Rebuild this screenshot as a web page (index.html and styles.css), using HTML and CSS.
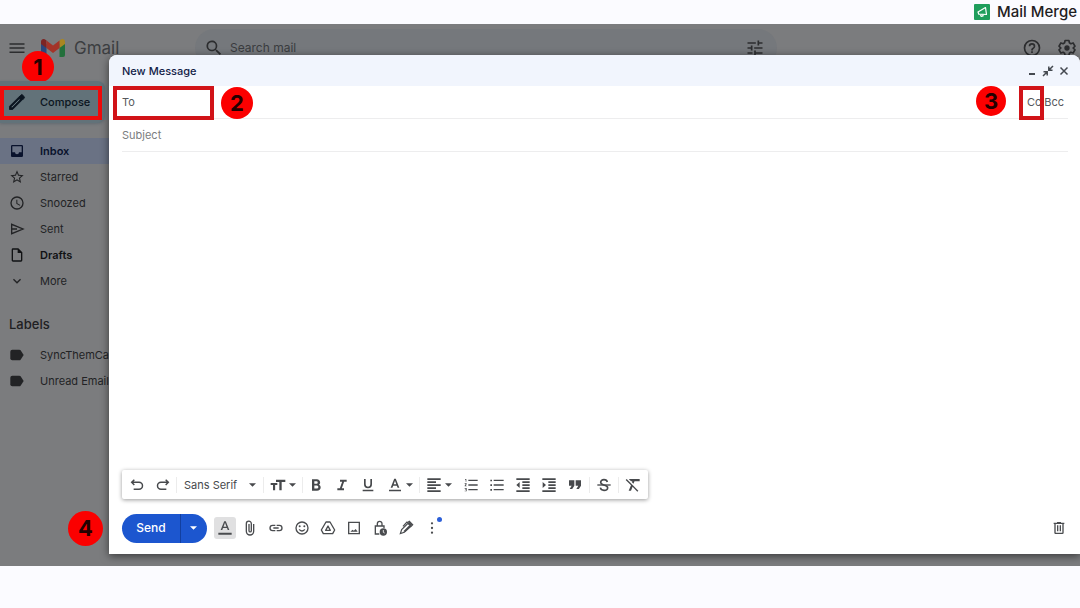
FILE: index.html
```html
<!DOCTYPE html>
<html lang="en">
<head>
<meta charset="utf-8">
<meta name="viewport" content="width=device-width, initial-scale=1">
<title>Gmail - New Message</title>
<link rel="stylesheet" href="styles.css">
</head>
<body>
<header class="brand">
  <svg class="brand-logo" viewBox="0 0 16 16"><rect width="16" height="16" rx="1" fill="#1f9e5c"/><path d="M11.500 3.500 4 8l.8 2.200 7.700.3zM6.300 10.400l.8 2 2-.5-.3-1.300" fill="none" stroke="#fff" stroke-width="1.200" stroke-linejoin="round"/></svg>
  <span>Mail Merge</span>
</header>

<main class="app">
  <div class="topbar">
    <button class="bare" aria-label="Main menu"><svg class="i18" viewBox="0 0 24 24"><path d="M2 5.500h20v2H2zm0 5.500h20v2H2zm0 5.500h20v2H2z"/></svg></button>
    <div class="gmail">
      <svg class="gmail-logo" viewBox="0 0 24 18"><path d="M0 2.500V16q0 2 2 2h3.500V5z" fill="#29477e"/><path d="M24 2.500V16q0 2-2 2h-3.500V5z" fill="#23703c"/><path d="M18.500 1.500V9L24 5V2.700C24 .2 21.200-.8 19.500.7z" fill="#a98621"/><path d="M5.500 1.500V9L0 5V2.700C0 .2 2.800-.8 4.500.7z" fill="#7c2524"/><path d="M5.500 1.500 12 6.500l6.500-5V9L12 14 5.500 9z" fill="#a43429"/></svg>
      <span>Gmail</span>
    </div>
    <label class="search">
      <svg class="i20" viewBox="0 0 24 24"><path d="M15.500 14h-.8l-.3-.3A6.500 6.500 0 1 0 13.700 14.400l.3.300v.8l5 5 1.500-1.500zm-6 0a4.500 4.500 0 1 1 0-9 4.500 4.500 0 0 1 0 9z"/></svg>
      <input type="text" placeholder="Search mail" aria-label="Search mail">
      <svg class="i20" viewBox="0 0 24 24"><path d="M3 17v2h6v-2zM3 5v2h10V5zm10 16v-2h8v-2h-8v-2h-2v6zM7 9v2H3v2h4v2h2V9zm14 4v-2H11v2zm-6-4h2V7h4V5h-4V3h-2z"/></svg>
    </label>
    <div class="topbar-end">
      <button class="bare" aria-label="Support"><svg class="i20" viewBox="0 0 24 24"><path d="M11 18h2v-2h-2zm1-16a10 10 0 1 0 0 20 10 10 0 0 0 0-20zm0 18a8 8 0 1 1 0-16 8 8 0 0 1 0 16zm0-14a4 4 0 0 0-4 4h2c0-1.100.9-2 2-2s2 .9 2 2c0 2-3 1.750-3 5h2c0-2.250 3-2.500 3-5a4 4 0 0 0-4-4z"/></svg></button>
      <button class="bare" aria-label="Settings"><svg class="i20" viewBox="0 0 24 24"><path d="M9.700 3h4.600l.6 2.800 1.700 1 2.700-.9 2.300 4-2.100 1.900v.4l2.100 1.900-2.300 4-2.700-.9-1.700 1-.6 2.800H9.700l-.6-2.800-1.700-1-2.700.9-2.300-4 2.100-1.900v-.4L2.400 9.900l2.300-4 2.700.9 1.700-1z" fill="none" stroke="currentColor" stroke-width="2" stroke-linejoin="round"/><circle cx="12" cy="12" r="3.200"/></svg></button>
    </div>
  </div>
  <span class="badge badge-1">1</span>

  <aside class="sidebar">
    <button class="compose-btn"><svg class="i20" viewBox="0 0 24 24"><path d="M3 17.200V21h3.800L19 8.800 15.200 5zm3.300 1.800H5v-1.300l9.600-9.600 1.300 1.300zM20.700 5.600l-2.300-2.300a1 1 0 0 0-1.400 0l-1.800 1.900L19 9l1.800-1.800c.3-.4.3-1.200-.1-1.600z" stroke="currentColor"/></svg>Compose<span class="mark mark-compose"></span></button>
    <nav class="nav">
      <a href="#" class="nav-item active"><svg class="i16" viewBox="0 0 24 24"><path d="M19 3H5a2 2 0 0 0-2 2v14c0 1.100.9 2 2 2h14a2 2 0 0 0 2-2V5a2 2 0 0 0-2-2zm0 11h-4a3 3 0 0 1-6 0H5V5h14z"/></svg>Inbox</a>
      <a href="#" class="nav-item"><svg class="i16" viewBox="0 0 24 24"><path d="m22 9.200-7.200-.6L12 2 9.200 8.600 2 9.200l5.500 4.800-1.700 7L12 17.300l6.200 3.700-1.600-7zM12 15.400l-3.800 2.300 1-4.300-3.300-2.900 4.400-.4L12 6.100l1.700 4 4.400.4-3.300 2.900 1 4.300z"/></svg>Starred</a>
      <a href="#" class="nav-item"><svg class="i16" viewBox="0 0 24 24"><path d="M12 2a10 10 0 1 0 0 20 10 10 0 0 0 0-20zm0 18a8 8 0 1 1 0-16 8 8 0 0 1 0 16zm.5-13H11v6l5.200 3.200.8-1.300-4.500-2.700z"/></svg>Snoozed</a>
      <a href="#" class="nav-item"><svg class="i16" viewBox="0 0 24 24"><path d="M4 5v14l17-7zm0 7h8" fill="none" stroke="currentColor" stroke-width="2"/></svg>Sent</a>
      <a href="#" class="nav-item strong"><svg class="i16" viewBox="0 0 24 24"><path d="M14 2H6a2 2 0 0 0-2 2v16c0 1.100.9 2 2 2h12a2 2 0 0 0 2-2V8zM6 20V4h7v5h5v11z"/></svg>Drafts</a>
      <a href="#" class="nav-item"><svg class="i16" viewBox="0 0 24 24"><path d="M7.400 8.600 12 13.200l4.600-4.600L18 10l-6 6-6-6z"/></svg>More</a>
    </nav>
    <h2 class="labels-title">Labels</h2>
    <nav class="nav">
      <a href="#" class="nav-item"><svg class="i16" viewBox="0 0 24 24"><path d="M15.500 4H5a3 3 0 0 0-3 3v10a3 3 0 0 0 3 3h10.500c.8 0 1.500-.4 1.900-1L22 12l-4.600-7c-.4-.6-1.100-1-1.900-1z"/></svg>SyncThemCal</a>
      <a href="#" class="nav-item"><svg class="i16" viewBox="0 0 24 24"><path d="M15.500 4H5a3 3 0 0 0-3 3v10a3 3 0 0 0 3 3h10.500c.8 0 1.500-.4 1.900-1L22 12l-4.600-7c-.4-.6-1.100-1-1.900-1z"/></svg>Unread Emails</a>
    </nav>
  </aside>

  <section class="dialog" aria-label="New Message">
    <div class="dialog-head">
      <h1>New Message</h1>
      <div class="window-tools">
        <button class="bare" aria-label="Minimize"><svg class="i12" viewBox="0 0 12 12"><path d="M3 8h6v2H3z"/></svg></button>
        <button class="bare" aria-label="Exit full screen"><svg class="i12" viewBox="0 0 12 12"><path d="M6.800 1.500v3.700H10.500M7 5l4-4M5.200 10.500V6.800H1.500M5 7l-4 4" fill="none" stroke="currentColor" stroke-width="1.500"/></svg></button>
        <button class="bare" aria-label="Close"><svg class="i12" viewBox="0 0 12 12"><path d="m2.500 2.500 7 7m0-7-7 7" fill="none" stroke="currentColor" stroke-width="1.500"/></svg></button>
      </div>
    </div>
    <div class="fields">
      <div class="field">
        <span class="mark mark-to"></span>
        <label for="to">To</label>
        <input id="to" type="text">
        <span class="badge badge-2">2</span>
        <span class="badge badge-3">3</span>
        <button class="bare cc">Cc<span class="mark mark-cc"></span></button>
        <button class="bare">Bcc</button>
      </div>
      <div class="field"><input type="text" placeholder="Subject" aria-label="Subject"></div>
    </div>
    <textarea class="message" aria-label="Message body"></textarea>

    <div class="format-bar">
      <button class="tool" aria-label="Undo"><svg class="i16" viewBox="0 0 24 24"><path d="M8 4 4 8l4 4M4.500 8H15a5 5 0 0 1 0 10.500H7" fill="none" stroke="currentColor" stroke-width="2.200"/></svg></button>
      <button class="tool" aria-label="Redo"><svg class="i16" viewBox="0 0 24 24"><path d="m16 4 4 4-4 4m3.500-4H9a5 5 0 0 0 0 10.500h8" fill="none" stroke="currentColor" stroke-width="2.200"/></svg></button>
      <span class="sep"></span>
      <span class="font-pick"><select aria-label="Font"><option>Sans Serif</option></select><svg class="caret" viewBox="0 0 8 4"><path d="M0 0h8L4 4z"/></svg></span>
      <span class="sep"></span>
      <button class="tool menu" aria-label="Size"><svg class="i16" viewBox="0 0 24 24"><path d="M9 4v3.500h5V20h3.500V7.500H23V4zM1 12h3.500v8h3.200v-8H11V9H1z"/></svg><svg class="caret" viewBox="0 0 8 4"><path d="M0 0h8L4 4z"/></svg></button>
      <span class="sep"></span>
      <button class="tool" aria-label="Bold"><svg class="i16" viewBox="0 0 24 24"><path d="M6 3.500v17h7.500c3.300 0 5.500-2 5.500-4.900 0-1.800-1-3.300-2.500-4 1-.7 1.700-1.900 1.700-3.300 0-2.800-2-4.800-4.900-4.800zm3.500 3h3.300a1.700 1.700 0 0 1 0 3.600H9.500zm0 6.400h3.800a2.200 2.200 0 0 1 0 4.500H9.500z" fill-rule="evenodd"/></svg></button>
      <button class="tool" aria-label="Italic"><svg class="i16" viewBox="0 0 24 24"><path d="M9 4v3h3.200l-3.400 10H5v3h10v-3h-3.200l3.400-10H19V4z"/></svg></button>
      <button class="tool" aria-label="Underline"><svg class="i16" viewBox="0 0 24 24"><path d="M12 17a6 6 0 0 0 6-6V3h-2.500v8a3.500 3.500 0 0 1-7 0V3H6v8a6 6 0 0 0 6 6zm-8 2v2.500h16V19z"/></svg></button>
      <button class="tool menu" aria-label="Text color"><svg class="i16" viewBox="0 0 24 24"><path d="M3 19h18v2.500H3zM10.800 2.500 5.500 16h2.600l1.200-3h5.400l1.200 3h2.600L13.200 2.500zm-.7 8.300L12 5.700l1.900 5.100z"/></svg><svg class="caret" viewBox="0 0 8 4"><path d="M0 0h8L4 4z"/></svg></button>
      <span class="sep"></span>
      <button class="tool menu" aria-label="Align"><svg class="i16" viewBox="0 0 24 24"><path d="M2 2h20v2.500H2zm0 4.500h13V9H2zM2 11h20v2.500H2zm0 4.500h13V18H2zM2 20h20v2.500H2z"/></svg><svg class="caret" viewBox="0 0 8 4"><path d="M0 0h8L4 4z"/></svg></button>
      <button class="tool" aria-label="Numbered list"><svg class="i16" viewBox="0 0 24 24"><path d="M8 4h14v2H8zm0 7h14v2H8zm0 7h14v2H8zM3 3h2v4H4V4H3zm-.5 6.500h3v1L4 13h1.500v1h-3v-1L4 10.500H2.500zm0 7h3v5h-3v-1h2v-1h-1v-1h1v-1h-2z"/></svg></button>
      <button class="tool" aria-label="Bulleted list"><svg class="i16" viewBox="0 0 24 24"><path d="M7 4h15v2H7zm0 7h15v2H7zm0 7h15v2H7zM2 4h2.500v2.500H2zm0 7h2.500v2.500H2zm0 7h2.500v2.500H2z"/></svg></button>
      <button class="tool" aria-label="Indent less"><svg class="i16" viewBox="0 0 24 24"><path d="M2 2h20v2.500H2zm9 4.500h11V9H11zm0 4.500h11v2.500H11zm0 4.500h11V18H11zM2 20h20v2.500H2zM2 12l5-4.500v9z"/></svg></button>
      <button class="tool" aria-label="Indent more"><svg class="i16" viewBox="0 0 24 24"><path d="M2 2h20v2.500H2zm9 4.500h11V9H11zm0 4.500h11v2.500H11zm0 4.500h11V18H11zM2 20h20v2.500H2zM7.500 12l-5-4.500v9z"/></svg></button>
      <button class="tool" aria-label="Quote"><svg class="i16" viewBox="0 0 24 24"><path d="M4 18h3.800l3.200-5V5H3v8h4zm10 0h3.800l3.200-5V5h-8v8h4z"/></svg></button>
      <span class="sep wide"></span>
      <button class="tool" aria-label="Strikethrough"><svg class="i16" viewBox="0 0 24 24"><path d="M2 11h20v2H2z"/><path d="M17 7.500C16.500 5 14.500 4 12 4 9 4 7 5.500 7 8s3 3.300 5 4c3 .8 5.500 1.500 5.500 4 0 2.600-2.500 4-5.500 4s-5-1.400-5.500-4" fill="none" stroke="currentColor" stroke-width="2.400"/></svg></button>
      <span class="sep wide"></span>
      <button class="tool" aria-label="Remove formatting"><svg class="i16" viewBox="0 0 24 24"><path d="M6 3v.5L9 6.500h2l-.6 1.400 2.300 2.300 1.600-3.700H22V3zM2.500 3 1 4.500l8 8L5.500 20.500h3.500l2.400-5.700L18.500 22l1.500-1.500z"/></svg></button>
    </div>

    <div class="actions">
      <div class="send"><button class="send-main">Send</button><button class="send-more" aria-label="More send options"><svg class="caret" viewBox="0 0 8 4"><path d="M0 0h8L4 4z"/></svg></button></div>
      <button class="tool on" aria-label="Formatting options"><svg class="i16" viewBox="0 0 24 24"><path d="M2 19h20v3H2zM10.800 2 5.500 15h2.400l1.100-3h6l1.100 3h2.400L13.200 2zm-1 8L12 4.300l2.200 5.700z"/></svg></button>
      <button class="tool" aria-label="Attach files"><svg class="i16" viewBox="0 0 24 24"><path d="M17.500 6v11a5.500 5.500 0 0 1-11 0V5.500a3.500 3.500 0 0 1 7.500 0V16a1.700 1.700 0 0 1-3.500 0V6" fill="none" stroke="currentColor" stroke-width="2"/></svg></button>
      <button class="tool" aria-label="Insert link"><svg class="i16" viewBox="0 0 24 24"><path d="M11 8H7a4 4 0 0 0 0 8h4m2-8h4a4 4 0 0 1 0 8h-4m-5-4h8" fill="none" stroke="currentColor" stroke-width="2"/></svg></button>
      <button class="tool" aria-label="Insert emoji"><svg class="i16" viewBox="0 0 24 24"><circle cx="12" cy="12" r="9" fill="none" stroke="currentColor" stroke-width="2"/><circle cx="8.500" cy="9.500" r="1.500"/><circle cx="15.500" cy="9.500" r="1.500"/><path d="M6.900 14a5.500 5.500 0 0 0 10.200 0h-2a4 4 0 0 1-6.200 0z"/></svg></button>
      <button class="tool" aria-label="Insert from Drive"><svg class="i16" viewBox="0 0 24 24"><path d="M9 3h6l7 12-3 5.500H5L2 15zm3 6-3.500 6.500h7z" fill="none" stroke="currentColor" stroke-width="2" stroke-linejoin="round"/></svg></button>
      <button class="tool" aria-label="Insert photo"><svg class="i16" viewBox="0 0 24 24"><path d="M4 3.500h16v17H4z" fill="none" stroke="currentColor" stroke-width="2"/><path d="M6.500 17.500h11l-3-4-2.700 2.700-2-1.700z"/></svg></button>
      <button class="tool" aria-label="Confidential mode"><svg class="i16" viewBox="0 0 24 24"><path d="M11 21H5V9h13v3M8 9V5.500a3.500 3.500 0 0 1 7 0V9" fill="none" stroke="currentColor" stroke-width="2"/><circle cx="17" cy="18" r="5.500"/><path d="M17 15v3.500l2 1" fill="none" stroke="#fff" stroke-width="1.200"/></svg></button>
      <button class="tool" aria-label="Insert signature"><svg class="i16" viewBox="0 0 24 24"><path d="m3.500 20.500 2-6L15 5l4 4-9.500 9.500zM14 4l3-2 5 5-2.500 2.500z" fill="none" stroke="currentColor" stroke-width="1.800"/><path d="m8 17 9-9 3 2-9 8zM14 5l3-2.500L21.500 7 19 9z"/><path d="m7.500 9.500 6.500-7" fill="none" stroke="currentColor" stroke-width="2"/></svg></button>
      <button class="tool more" aria-label="More options"><svg class="i16" viewBox="0 0 24 24"><circle cx="12" cy="5" r="1.700"/><circle cx="12" cy="12" r="1.700"/><circle cx="12" cy="19" r="1.700"/></svg><span class="dot"></span></button>
      <button class="tool trash" aria-label="Discard draft"><svg class="i16" viewBox="0 0 24 24"><path d="M15 4V3H9v1H4v2h1v13c0 1.100.9 2 2 2h10a2 2 0 0 0 2-2V6h1V4zm2 15H7V6h10zM9 8h2v9H9zm4 0h2v9h-2z"/></svg></button>
    </div>
    <span class="badge badge-4">4</span>
  </section>
</main>
</body>
</html>
```

FILE: styles.css
```css
* { box-sizing: border-box; }

body {
  margin: 0;
  min-height: 100vh;
  padding-bottom: 42px;
  display: flex;
  flex-direction: column;
  background: #fbfbff;
  color: #1f2022;
  font: 11px/16px Inter, "Noto Sans", sans-serif;
}

button, input, select, textarea { font: inherit; color: inherit; }
button { padding: 0; border: 0; background: none; }
input, select, textarea { border: 0; background: none; outline: 0; padding: 0; min-width: 0; }
svg { display: block; fill: currentColor; flex: none; }

.i12 { width: 12px; height: 12px; }
.i16 { width: 16px; height: 16px; }
.i18 { width: 18px; height: 18px; }
.i20 { width: 20px; height: 20px; }
.caret { width: 7px; height: 4px; }

.brand {
  height: 24px;
  padding-right: 3px;
  display: flex;
  align-items: center;
  justify-content: flex-end;
  gap: 7px;
  font-size: 15px;
  font-weight: 500;
}
.brand-logo { width: 16px; height: 16px; }

.app {
  position: relative;
  flex: 1;
  overflow: hidden;
  background: #7b7c7e;
}

.topbar {
  height: 48px;
  padding: 0 3px 0 8px;
  display: flex;
  align-items: center;
  color: #2c2d2f;
}
.gmail {
  width: 154px;
  margin-left: 15px;
  display: flex;
  align-items: center;
  gap: 9px;
  font-size: 17px;
  color: #3c3e41;
}
.gmail-logo { width: 24px; height: 18px; }
.search {
  flex: 0 1 582px;
  height: 38px;
  padding: 0 12px 0 9px;
  border-radius: 19px;
  display: flex;
  align-items: center;
  gap: 6px;
  background: #75787c;
  font-size: 12px;
}
.search input { flex: 1; }
.search input::placeholder { color: #3a3c3f; opacity: 1; }
.topbar-end { margin-left: auto; display: flex; gap: 15px; }

.sidebar { width: 110px; padding-top: 9px; }
.compose-btn {
  position: relative;
  width: 105px;
  height: 42px;
  padding-left: 7px;
  display: flex;
  align-items: center;
  gap: 13px;
  border-radius: 0 8px 8px 0;
  background: #627279;
  box-shadow: 0 1px 3px rgba(60, 80, 95, 0.4);
  color: #0b1520;
  font-weight: 500;
}
.nav { display: flex; flex-direction: column; white-space: nowrap; }
.compose-btn + .nav { margin-top: 15px; }
.nav-item {
  height: 26px;
  padding-left: 9px;
  display: flex;
  align-items: center;
  gap: 15px;
  color: #222325;
  text-decoration: none;
}
.nav-item.active { background: #6a7284; color: #09122c; font-weight: 600; }
.nav-item.strong { color: #111214; font-weight: 600; }
.labels-title {
  margin: 21px 0 9px;
  padding-left: 9px;
  font-size: 13px;
  line-height: 18px;
  font-weight: 500;
}

.dialog {
  position: absolute;
  inset: 31px 0 12px 109px;
  display: flex;
  flex-direction: column;
  border-radius: 8px 8px 0 0;
  background: #fff;
  box-shadow: 0 2px 8px rgba(0, 0, 0, 0.55);
  color: #55585c;
}
.dialog-head {
  height: 31px;
  padding: 0 10px 0 13px;
  display: flex;
  align-items: center;
  justify-content: space-between;
  border-radius: 8px 8px 0 0;
  background: #f1f5fd;
  color: #444950;
}
.dialog-head h1 { margin: 0; font-size: 11px; font-weight: 500; color: #122147; }
.window-tools { display: flex; gap: 4px; }
.fields { padding: 0 12px 0 13px; }
.field {
  position: relative;
  height: 33px;
  display: flex;
  align-items: center;
  border-bottom: 1px solid #ededee;
}
.field input { flex: 1; }
.field input::placeholder { color: #7b7d80; opacity: 1; }
.cc { position: relative; margin-right: 3px; }
.field .bare { flex: none; }
.field .bare:last-child { padding-right: 4px; }

.message { flex: 1; resize: none; }

.format-bar {
  align-self: flex-start;
  height: 29px;
  margin-left: 13px;
  padding: 0 2px;
  display: flex;
  align-items: center;
  border-radius: 2px;
  background: #fff;
  box-shadow: 0 1px 4px rgba(0, 0, 0, 0.4);
  color: #47494c;
}
.tool {
  position: relative;
  width: 26px;
  height: 22px;
  display: flex;
  align-items: center;
  justify-content: center;
}
.tool.menu { width: 38px; gap: 3px; }
.sep { width: 1px; height: 16px; background: #ececec; }
.sep.wide { margin: 0 1px; }
.font-pick {
  width: 86px;
  padding: 0 7px;
  display: flex;
  align-items: center;
  justify-content: space-between;
}
.font-pick select { flex: 1; appearance: none; }

.actions {
  height: 55px;
  padding: 3px 8px 0 13px;
  display: flex;
  align-items: center;
  color: #4a4c4f;
}
.send {
  width: 85px;
  height: 29px;
  margin-right: 7px;
  display: flex;
  border-radius: 15px;
  overflow: hidden;
  background: #1c56cf;
  color: #fff;
}
.send-main { flex: 1; font-size: 12px; font-weight: 500; }
.send-more {
  width: 27px;
  padding-right: 2px;
  display: flex;
  align-items: center;
  justify-content: center;
  border-left: 1px solid #123f9f;
}
.tool.on { width: 22px; margin-right: 1px; border-radius: 3px; background: #e0e0e1; }
.trash { margin-left: auto; }
.dot {
  position: absolute;
  top: 0;
  right: 3px;
  width: 5px;
  height: 5px;
  border-radius: 50%;
  background: #2c5fd8;
}

/* Tutorial step markers */
.mark { position: absolute; border: 4px solid #d11318; pointer-events: none; }
.mark-compose { inset: 5px 3px 3px 0; border-color: #f00a0a; }
.mark-to { top: 0; left: -9px; width: 101px; height: 34px; }
.mark-cc { top: -8px; left: -8px; width: 25px; height: 34px; }
.badge {
  position: absolute;
  width: 32px;
  height: 32px;
  border-radius: 50%;
  background: #fb0000;
  color: #240000;
  font-size: 22px;
  line-height: 32px;
  font-weight: 700;
  text-align: center;
}
.badge-1 { top: 27px; left: 22px; }
.badge-2 { top: 1px; left: 99px; }
.badge-3 { top: 0; right: 62px; width: 30px; height: 30px; line-height: 30px; }
.badge-4 { bottom: 8px; left: -41px; width: 35px; height: 35px; line-height: 35px; }
```
